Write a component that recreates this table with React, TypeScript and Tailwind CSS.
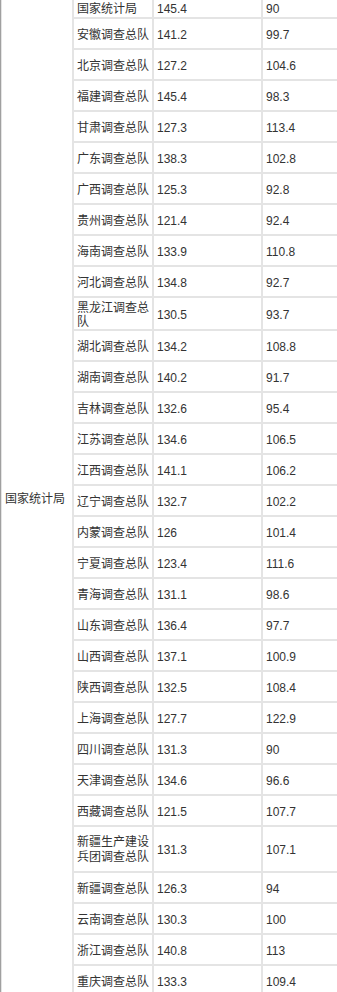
const rows: [string, string, string][] = [
  ['国家统计局', '145.4', '90'],
  ['安徽调查总队', '141.2', '99.7'],
  ['北京调查总队', '127.2', '104.6'],
  ['福建调查总队', '145.4', '98.3'],
  ['甘肃调查总队', '127.3', '113.4'],
  ['广东调查总队', '138.3', '102.8'],
  ['广西调查总队', '125.3', '92.8'],
  ['贵州调查总队', '121.4', '92.4'],
  ['海南调查总队', '133.9', '110.8'],
  ['河北调查总队', '134.8', '92.7'],
  ['黑龙江调查总队', '130.5', '93.7'],
  ['湖北调查总队', '134.2', '108.8'],
  ['湖南调查总队', '140.2', '91.7'],
  ['吉林调查总队', '132.6', '95.4'],
  ['江苏调查总队', '134.6', '106.5'],
  ['江西调查总队', '141.1', '106.2'],
  ['辽宁调查总队', '132.7', '102.2'],
  ['内蒙调查总队', '126', '101.4'],
  ['宁夏调查总队', '123.4', '111.6'],
  ['青海调查总队', '131.1', '98.6'],
  ['山东调查总队', '136.4', '97.7'],
  ['山西调查总队', '137.1', '100.9'],
  ['陕西调查总队', '132.5', '108.4'],
  ['上海调查总队', '127.7', '122.9'],
  ['四川调查总队', '131.3', '90'],
  ['天津调查总队', '134.6', '96.6'],
  ['西藏调查总队', '121.5', '107.7'],
  ['新疆生产建设兵团调查总队', '131.3', '107.1'],
  ['新疆调查总队', '126.3', '94'],
  ['云南调查总队', '130.3', '100'],
  ['浙江调查总队', '140.8', '113'],
  ['重庆调查总队', '133.3', '109.4'],
];

const cell = 'border border-[#e4e4e4] px-[3px] align-middle text-left';

export default function App() {
  return (
    <div className="w-[337px] h-[992px] overflow-hidden bg-white text-[12px] leading-[14px] text-[#333] font-['Liberation_Sans','Noto_Sans_CJK_SC',sans-serif]">
      <table className="w-[420px] table-fixed border-separate border-spacing-0 border-l border-l-[#a0a0a0]">
        <colgroup>
          <col className="w-[72px]" />
          <col className="w-[80px]" />
          <col className="w-[109px]" />
          <col />
        </colgroup>
        <tbody>
          {rows.map(([name, a, b], i) => {
            const tall = name.length > 10;
            const h =
              i === 0
                ? 'h-[18px] border-t-0 pt-0 pb-0'
                : tall
                  ? 'h-[46px] leading-[15px] pt-[2px] pb-0'
                  : 'h-[31px] pt-[3px] pb-0';
            return (
              <tr key={name}>
                {i === 0 && (
                  <td rowSpan={rows.length} className={`${cell} border-t-0 pt-[2px] pb-0 pl-[3px]`}>
                    国家统计局
                  </td>
                )}
                <td className={`${cell} ${h}`}>{name}</td>
                <td className={`${cell} ${h}`}>{a}</td>
                <td className={`${cell} ${h}`}>{b}</td>
              </tr>
            );
          })}
        </tbody>
      </table>
    </div>
  );
}
